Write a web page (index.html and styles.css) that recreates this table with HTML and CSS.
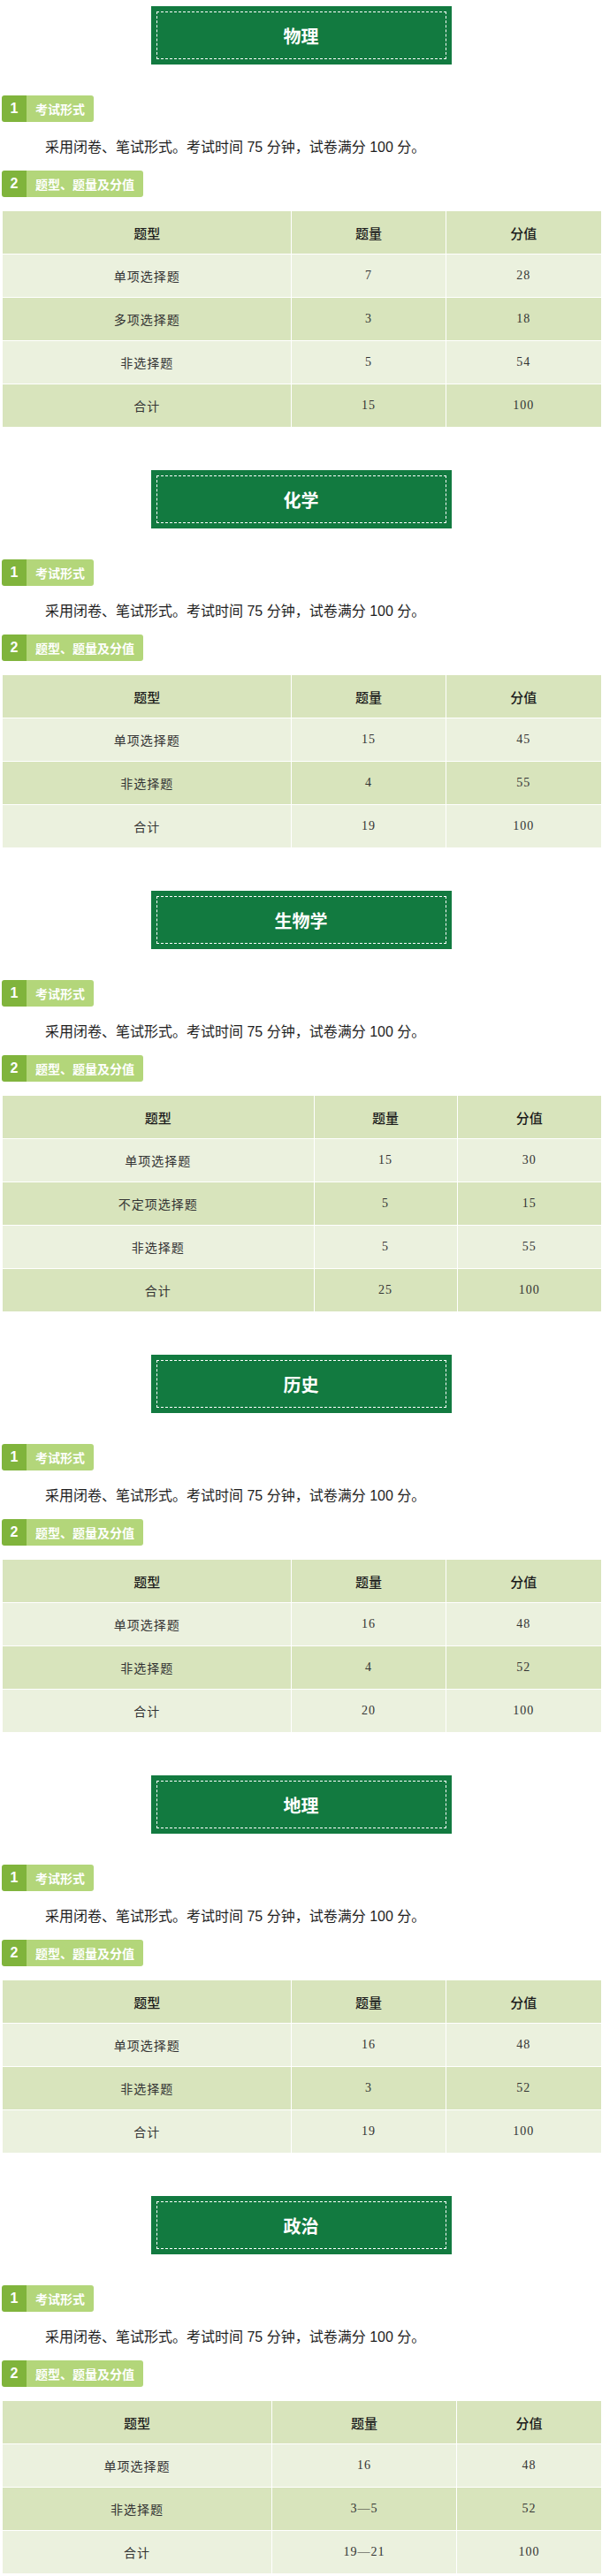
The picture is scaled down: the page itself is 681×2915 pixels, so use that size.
FILE: index.html
```html
<!DOCTYPE html>
<html lang="zh-CN">
<head>
<meta charset="utf-8">
<title>考试形式与题型</title>
<link rel="stylesheet" href="styles.css">
</head>
<body>
<main class="page">

  <section class="subject">
    <div class="title"><div class="title-inner">物理</div></div>
    <div class="tag"><span class="tag-num">1</span><span class="tag-text">考试形式</span></div>
    <p class="desc">采用闭卷、笔试形式。考试时间 75 分钟，试卷满分 100 分。</p>
    <div class="tag"><span class="tag-num">2</span><span class="tag-text">题型、题量及分值</span></div>
    <div class="table-wrap">
      <table class="score t-a">
        <colgroup><col class="c1"><col class="c2"><col class="c3"></colgroup>
        <thead><tr><th>题型</th><th>题量</th><th>分值</th></tr></thead>
        <tbody>
          <tr><td>单项选择题</td><td>7</td><td>28</td></tr>
          <tr><td>多项选择题</td><td>3</td><td>18</td></tr>
          <tr><td>非选择题</td><td>5</td><td>54</td></tr>
          <tr><td>合计</td><td>15</td><td>100</td></tr>
        </tbody>
      </table>
    </div>
  </section>

  <section class="subject">
    <div class="title"><div class="title-inner">化学</div></div>
    <div class="tag"><span class="tag-num">1</span><span class="tag-text">考试形式</span></div>
    <p class="desc">采用闭卷、笔试形式。考试时间 75 分钟，试卷满分 100 分。</p>
    <div class="tag"><span class="tag-num">2</span><span class="tag-text">题型、题量及分值</span></div>
    <div class="table-wrap">
      <table class="score t-a">
        <colgroup><col class="c1"><col class="c2"><col class="c3"></colgroup>
        <thead><tr><th>题型</th><th>题量</th><th>分值</th></tr></thead>
        <tbody>
          <tr><td>单项选择题</td><td>15</td><td>45</td></tr>
          <tr><td>非选择题</td><td>4</td><td>55</td></tr>
          <tr><td>合计</td><td>19</td><td>100</td></tr>
        </tbody>
      </table>
    </div>
  </section>

  <section class="subject">
    <div class="title"><div class="title-inner">生物学</div></div>
    <div class="tag"><span class="tag-num">1</span><span class="tag-text">考试形式</span></div>
    <p class="desc">采用闭卷、笔试形式。考试时间 75 分钟，试卷满分 100 分。</p>
    <div class="tag"><span class="tag-num">2</span><span class="tag-text">题型、题量及分值</span></div>
    <div class="table-wrap">
      <table class="score t-b">
        <colgroup><col class="c1"><col class="c2"><col class="c3"></colgroup>
        <thead><tr><th>题型</th><th>题量</th><th>分值</th></tr></thead>
        <tbody>
          <tr><td>单项选择题</td><td>15</td><td>30</td></tr>
          <tr><td>不定项选择题</td><td>5</td><td>15</td></tr>
          <tr><td>非选择题</td><td>5</td><td>55</td></tr>
          <tr><td>合计</td><td>25</td><td>100</td></tr>
        </tbody>
      </table>
    </div>
  </section>

  <section class="subject">
    <div class="title"><div class="title-inner">历史</div></div>
    <div class="tag"><span class="tag-num">1</span><span class="tag-text">考试形式</span></div>
    <p class="desc">采用闭卷、笔试形式。考试时间 75 分钟，试卷满分 100 分。</p>
    <div class="tag"><span class="tag-num">2</span><span class="tag-text">题型、题量及分值</span></div>
    <div class="table-wrap">
      <table class="score t-a">
        <colgroup><col class="c1"><col class="c2"><col class="c3"></colgroup>
        <thead><tr><th>题型</th><th>题量</th><th>分值</th></tr></thead>
        <tbody>
          <tr><td>单项选择题</td><td>16</td><td>48</td></tr>
          <tr><td>非选择题</td><td>4</td><td>52</td></tr>
          <tr><td>合计</td><td>20</td><td>100</td></tr>
        </tbody>
      </table>
    </div>
  </section>

  <section class="subject">
    <div class="title"><div class="title-inner">地理</div></div>
    <div class="tag"><span class="tag-num">1</span><span class="tag-text">考试形式</span></div>
    <p class="desc">采用闭卷、笔试形式。考试时间 75 分钟，试卷满分 100 分。</p>
    <div class="tag"><span class="tag-num">2</span><span class="tag-text">题型、题量及分值</span></div>
    <div class="table-wrap">
      <table class="score t-a">
        <colgroup><col class="c1"><col class="c2"><col class="c3"></colgroup>
        <thead><tr><th>题型</th><th>题量</th><th>分值</th></tr></thead>
        <tbody>
          <tr><td>单项选择题</td><td>16</td><td>48</td></tr>
          <tr><td>非选择题</td><td>3</td><td>52</td></tr>
          <tr><td>合计</td><td>19</td><td>100</td></tr>
        </tbody>
      </table>
    </div>
  </section>

  <section class="subject">
    <div class="title"><div class="title-inner">政治</div></div>
    <div class="tag"><span class="tag-num">1</span><span class="tag-text">考试形式</span></div>
    <p class="desc">采用闭卷、笔试形式。考试时间 75 分钟，试卷满分 100 分。</p>
    <div class="tag"><span class="tag-num">2</span><span class="tag-text">题型、题量及分值</span></div>
    <div class="table-wrap">
      <table class="score t-c">
        <colgroup><col class="c1"><col class="c2"><col class="c3"></colgroup>
        <thead><tr><th>题型</th><th>题量</th><th>分值</th></tr></thead>
        <tbody>
          <tr><td>单项选择题</td><td>16</td><td>48</td></tr>
          <tr><td>非选择题</td><td>3—5</td><td>52</td></tr>
          <tr><td>合计</td><td>19—21</td><td>100</td></tr>
        </tbody>
      </table>
    </div>
  </section>

</main>
</body>
</html>
```

FILE: styles.css
```css
html, body {
  margin: 0;
  padding: 0;
  background: #ffffff;
}

body {
  font-family: "Liberation Sans", "Noto Sans CJK SC", sans-serif;
  color: #222;
}

.page {
  display: flex;
  flex-direction: column;
  gap: 48px;
  padding: 7px 0 6px 0;
  width: 681px;
  box-sizing: border-box;
}

.subject {
  display: flex;
  flex-direction: column;
}

/* Title banner */
.title {
  position: relative;
  width: 340px;
  height: 66px;
  margin: 0 auto 35px auto;
  padding: 6px;
  box-sizing: border-box;
  background: #127a40;
}

.title::before,
.title::after {
  content: "";
  position: absolute;
  z-index: -1;
  bottom: 7px;
  width: 49%;
  height: 20px;
  box-shadow: 0 9px 6px rgba(0, 0, 0, 0.45);
}

.title::before {
  left: 5px;
  transform: rotate(-1.5deg);
}

.title::after {
  right: 5px;
  transform: rotate(1.5deg);
}

.title-inner {
  height: 100%;
  box-sizing: border-box;
  border: 1px dashed #ffffff;
  display: flex;
  align-items: center;
  justify-content: center;
  color: #ffffff;
  font-family: "Noto Sans CJK SC", sans-serif;
  font-weight: 700;
  font-size: 20px;
}

/* Numbered tags */
.tag {
  display: flex;
  width: max-content;
  height: 30px;
  margin-left: 2px;
  border-radius: 3px;
  overflow: hidden;
}

.tag-num {
  width: 28px;
  display: flex;
  align-items: center;
  justify-content: center;
  background: #80b43c;
  color: #ffffff;
  font-family: "Liberation Sans", sans-serif;
  font-weight: 700;
  font-size: 16px;
}

.tag-text {
  padding: 0 10px;
  background: #b3d67a;
  color: #ffffff;
  font-family: "Noto Sans CJK SC", sans-serif;
  font-weight: 700;
  font-size: 14px;
  line-height: 30px;
}

.desc {
  height: 26px;
  margin: 16px 0 13px 0;
  padding-left: 3px;
  text-indent: 48px;
  font-size: 16px;
  line-height: 26px;
  color: #1e1e1e;
  overflow: hidden;
}

/* Tables */
.table-wrap {
  margin-top: 15px;
  padding-left: 2px;
}

.score {
  width: 100%;
  border-collapse: collapse;
  border: 1px solid #ffffff;
  table-layout: fixed;
}

.score th,
.score td {
  height: 48px;
  padding: 0;
  border: 1px solid #ffffff;
  text-align: center;
  vertical-align: middle;
}

.score th {
  background: #d8e4bc;
  font-family: "Noto Sans CJK SC", sans-serif;
  font-weight: 500;
  font-size: 15px;
  color: #1a1a1a;
}

.score td {
  font-family: "Liberation Serif", "Noto Sans CJK SC", serif;
  font-weight: 400;
  font-size: 14px;
  letter-spacing: 1px;
  color: #333333;
}

.score tbody tr:nth-child(odd) td {
  background: #ebf1de;
}

.score tbody tr:nth-child(even) td {
  background: #d8e4bc;
}

.t-a .c1 { width: 48.3%; }
.t-a .c2 { width: 25.7%; }
.t-a .c3 { width: 26%; }

.t-b .c1 { width: 52%; }
.t-b .c2 { width: 23.9%; }
.t-b .c3 { width: 24.1%; }

.t-c .c1 { width: 45%; }
.t-c .c2 { width: 30.8%; }
.t-c .c3 { width: 24.2%; }
```
